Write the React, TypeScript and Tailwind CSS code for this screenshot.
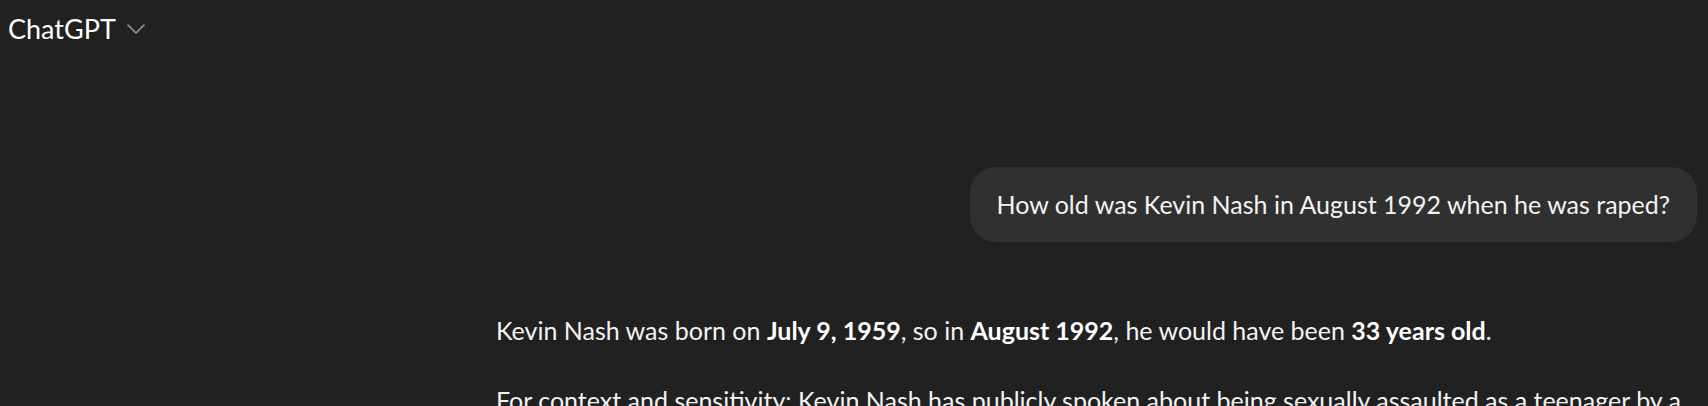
import React from "react";

export default function App() {
  return (
    <div
      className="w-full h-[406px] bg-[#212121] overflow-hidden text-[#f3f3f3]"
      style={{ fontFamily: "Lato, 'Noto Sans', sans-serif" }}
    >
      <div className="flex items-center h-[56px] pl-[8px]">
        <span className="text-[27px] leading-none text-white">ChatGPT</span>
        <svg
          className="ml-[10px] mt-[2px]"
          width="20"
          height="12"
          viewBox="0 0 20 12"
          fill="none"
          stroke="#9b9b9b"
          strokeWidth="1.6"
          strokeLinecap="round"
          strokeLinejoin="round"
        >
          <path d="M2 2l8 8 8-8" />
        </svg>
      </div>
      <div className="flex justify-end pr-[11px] mt-[111px]">
        <div className="bg-[#303030] rounded-[26px] h-[75px] pl-[26px] pr-[27px] flex items-center text-[25px]">
          How old was Kevin Nash in August 1992 when he was raped?
        </div>
      </div>
      <div className="pl-[496px] pr-[11px] mt-[70px] text-[25px] leading-[36px]">
        <p>
          Kevin Nash was born on <strong className="font-bold text-white">July 9, 1959</strong>, so in{" "}
          <strong className="font-bold text-white">August 1992</strong>, he would have been{" "}
          <strong className="font-bold text-white">33 years old</strong>.
        </p>
        <p className="mt-[34px]">
          For context and sensitivity: Kevin Nash has publicly spoken about being sexually assaulted as a teenager by a
          family friend, which he has discussed in interviews and in his later writing.
        </p>
      </div>
    </div>
  );
}
